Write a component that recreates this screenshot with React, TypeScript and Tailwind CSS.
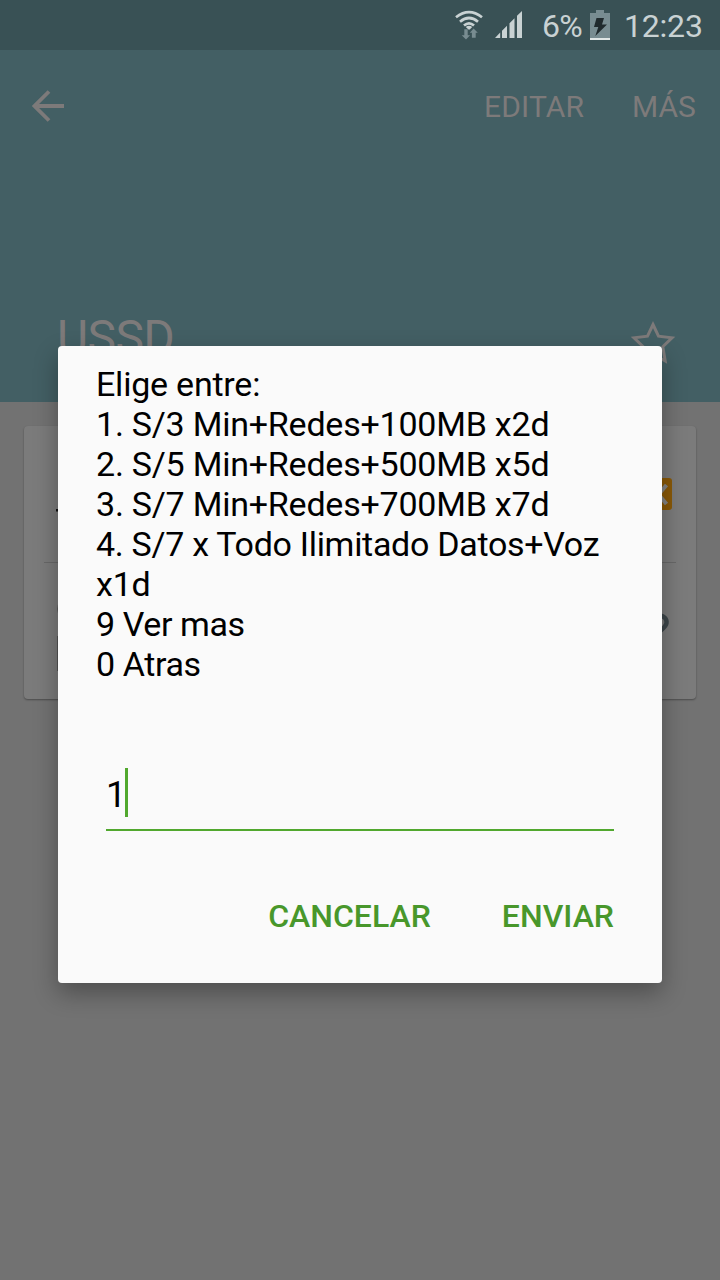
import type { ReactNode } from "react";

function StatusBar() {
  return (
    <div className="flex h-[50px] shrink-0 items-center bg-[#395155] pl-[455px] text-[#c9d2d3]">
      <svg className="h-[30px] w-[28px] shrink-0" viewBox="0 0 28 30" fill="none">
        <g stroke="#c9d2d3" strokeWidth="2.7">
          <path d="M1 7.3Q14 -2.9 27 7.3" />
          <path d="M5 11.7Q14 4.3 23 11.7" />
          <path d="M9 15.6Q14 11.3 19 15.6" />
        </g>
        <path d="M10.8 17Q14 14.5 17.2 17L14.8 19.5H13.4Z" fill="#c9d2d3" />
        <path d="M9.3 19.3h3.4v6h2.4l-4.1 4.2-4.3-4.2h2.6zM16.9 27.7v-5h-2.1l3.8-4.3 4.2 4.3h-2.1v5z" fill="#788c91" />
      </svg>
      <svg className="ml-[12px] h-[28px] w-[28px] shrink-0" viewBox="0 0 28 28" fill="#c9d2d3">
        <path d="M0 27L5.2 21.5V27zM7 19.7L12 14.7V27H7zM14.5 12.2L19.5 7.2V27h-5zM22 4.7L27 0V27h-5z" />
      </svg>
      <span className="ml-[19px] w-[42px] translate-y-[1px] text-[32px] leading-[50px] tracking-[-0.7px]">6%</span>
      <svg className="ml-[6px] h-[32px] w-[20px] shrink-0" viewBox="0 0 20 32">
        <path d="M0 4H6V1H14V4H20V30H0Z" fill="#788c91" />
        <path d="M0 29H20V31H0Z" fill="#e0e6e6" />
        <path d="M6.5 9H14L12 15.5H17L5.3 27L8.3 18H4Z" fill="#202a2d" />
      </svg>
      <span className="ml-[14px] translate-y-[1px] text-[32px] leading-[50px] tracking-[-0.2px]">12:23</span>
    </div>
  );
}

function Header() {
  return (
    <header className="flex h-[352px] shrink-0 flex-col justify-between bg-[#435f64] text-[#7d7a7a]">
      <div className="flex h-[112px] items-center pl-[32px] text-[30px]">
        <svg className="h-[32px] w-[32px]" viewBox="0 0 32 32" fill="none" stroke="#7d7a7a" strokeWidth="3.8">
          <path d="M32 16H3M17 1.5L2.5 16L17 30.5" />
        </svg>
        <span className="ml-[420px] w-[102px] tracking-[0.15px]">EDITAR</span>
        <span className="ml-[46px] w-[68px]">MÁS</span>
      </div>
      <div className="flex h-[100px] items-start justify-between pl-[57px] pr-[44px]">
        <h1 className="text-[48px] font-normal leading-[72px] tracking-[-0.6px]">USSD</h1>
        <svg className="mt-[18px] h-[48px] w-[46px]" viewBox="0 0 46 48" fill="none" stroke="#7d7a7a" strokeWidth="3">
          <path d="M23 4.5L28.5 16.2L42 17.8L32.8 26.8L35.2 41L23 34.2L10.8 41L13.2 26.8L4 17.8L17.5 16.2Z" />
        </svg>
      </div>
    </header>
  );
}

function ContactCard() {
  return (
    <section className="mx-[24px] mt-[24px] h-[273px] shrink-0 rounded-[4px] bg-[#7b7b7b] px-[20px] shadow-[0_1px_2px_rgba(0,0,0,0.35)]">
      <div className="flex h-[137px] items-center justify-between border-b border-[#686868] pl-[12px] pr-[4px]">
        <svg className="h-[40px] w-[20px]" viewBox="0 0 20 40">
          <path d="M0 35H4V37.5H0Z" fill="#111" />
        </svg>
        <svg className="h-[32px] w-[32px]" viewBox="0 0 32 32">
          <rect width="32" height="32" rx="3" fill="#8a5907" />
          <path d="M26.5 7L18.5 16.5L26.5 26" fill="none" stroke="#858585" strokeWidth="4" />
        </svg>
      </div>
      <div className="flex h-[136px] items-start justify-between pl-[13px] pr-[6px]">
        <svg className="h-[120px] w-[20px]" viewBox="0 0 20 120">
          <path d="M4 39Q-2 46 4 53" stroke="#5d5d5d" strokeWidth="2" fill="none" />
          <path d="M0.3 73H2V108H0.3Z" fill="#444" />
        </svg>
        <svg className="mt-[48px] h-[34px] w-[24px]" viewBox="0 0 24 34">
          <path d="M13 4.5C18 4.5 21 8 20.5 12C20 16 16 18 13 21" stroke="#3d464a" strokeWidth="4.5" fill="none" />
        </svg>
      </div>
    </section>
  );
}

function Line({ children, className = "tracking-[-0.22px]" }: { children: ReactNode; className?: string }) {
  return <p className={`whitespace-nowrap ${className}`}>{children}</p>;
}

function UssdDialog() {
  return (
    <div
      role="dialog"
      className="absolute left-[58px] top-[346px] flex h-[637px] w-[604px] flex-col rounded-[4px] bg-[#fafafa] shadow-[0_10px_24px_rgba(0,0,0,0.32)]"
    >
      <div className="h-[422px] pl-[38px] pt-[18px] text-[34px] leading-[40px] text-black">
        <Line>Elige entre:</Line>
        <Line>1. S/3 Min+Redes+100MB x2d</Line>
        <Line>2. S/5 Min+Redes+500MB x5d</Line>
        <Line>3. S/7 Min+Redes+700MB x7d</Line>
        <Line className="tracking-[-0.3px]">4. S/7 x Todo Ilimitado Datos+Voz</Line>
        <Line>x1d</Line>
        <Line className="tracking-[-0.4px]">9 Ver mas</Line>
        <Line className="tracking-[-0.4px]">0 Atras</Line>
      </div>
      <div className="mx-[48px] flex h-[63px] items-start border-b-2 border-[#51a82e] text-black">
        <span className="w-[19px] pt-[2px] text-[36px] leading-[50px]">1</span>
        <span className="h-[49px] w-[3px] bg-[#51a82e]" />
      </div>
      <div className="mt-[55px] flex h-[60px] items-center justify-end gap-[71px] pr-[48px] text-[32px] font-medium text-[#48972b]">
        <button>CANCELAR</button>
        <button>ENVIAR</button>
      </div>
    </div>
  );
}

export default function App() {
  return (
    <main className="relative flex h-[1280px] w-[720px] flex-col overflow-hidden bg-[#727272] font-['Roboto',sans-serif]">
      <StatusBar />
      <Header />
      <ContactCard />
      <UssdDialog />
    </main>
  );
}
